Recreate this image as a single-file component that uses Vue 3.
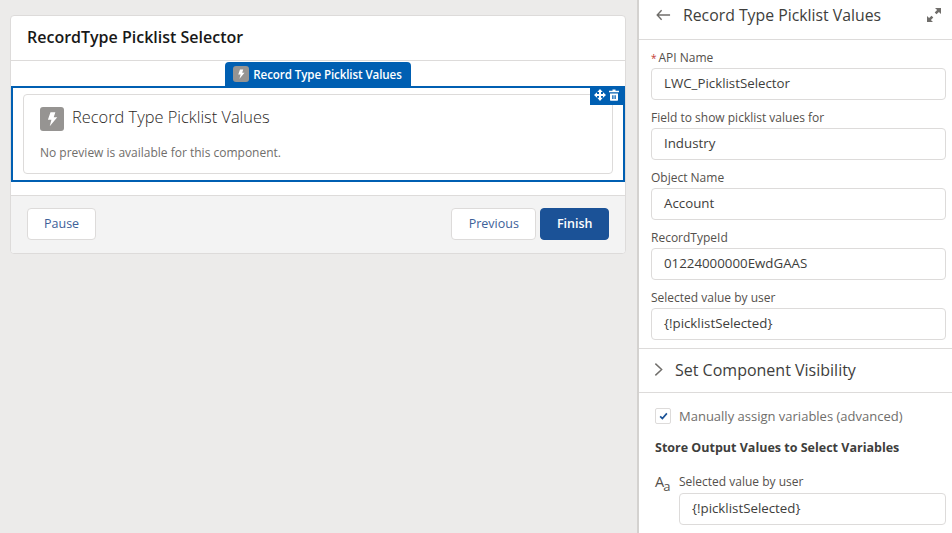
<template>
  <div class="builder">
    <main class="canvas">
      <section class="screen">
        <h1 class="screen-title">RecordType Picklist Selector</h1>
        <div class="screen-body">
          <div class="tab-row">
            <div class="tab">
              <span class="bolt bolt-small">
                <svg viewBox="0 0 24 24"><path d="M10 3h6.500l-2.200 6.500h4.700L9 21.500l2.200-8.500H6.500z" /></svg>
              </span>
              Record Type Picklist Values
            </div>
          </div>
          <div class="selected">
            <div class="tools">
              <svg class="tool-move" viewBox="0 0 24 24"><path d="M12 0l5.500 6H14v4h4V6.500l6 5.500-6 5.500V14h-4v3.500h3.500L12 24l-5.500-6.500H10V14H6v3.500L0 12l6-5.500V10h4V6H6.500z" /></svg>
              <svg class="tool-trash" viewBox="0 0 24 24"><path d="M9 1h6v2.500h7v3H2v-3h7zM4 9h16v13a1.500 1.500 0 0 1-1.500 1.500h-13A1.500 1.500 0 0 1 4 22zm4.500 3.500V20h2.500v-7.500zm4.500 0V20h2.500v-7.500z" /></svg>
            </div>
            <div class="component-card">
              <div class="component-head">
                <span class="bolt">
                  <svg viewBox="0 0 24 24"><path d="M10 3h6.500l-2.200 6.500h4.700L9 21.500l2.200-8.500H6.500z" /></svg>
                </span>
                <span class="component-name">Record Type Picklist Values</span>
              </div>
              <p class="no-preview">No preview is available for this component.</p>
            </div>
          </div>
        </div>
        <footer class="screen-footer">
          <button class="btn">Pause</button>
          <div class="nav">
            <button class="btn btn-prev">Previous</button>
            <button class="btn btn-finish">Finish</button>
          </div>
        </footer>
      </section>
    </main>

    <aside class="panel">
      <header class="panel-head">
        <svg class="back" viewBox="0 0 16 12"><path d="M6 1 1.300 6 6 11M1.500 6H15" /></svg>
        <span class="panel-title">Record Type Picklist Values</span>
        <svg class="expand" viewBox="0 0 14 14"><path d="M8 0h6v6l-2.100-2.100-2.400 2.400-1.800-1.800 2.400-2.400zM6 14H0V8l2.100 2.100 2.400-2.400 1.800 1.800-2.400 2.400z" /></svg>
      </header>

      <div class="fields">
        <div v-for="field in fields" :key="field.label" class="field">
          <label><span v-if="field.required" class="req">*</span>{{ field.label }}</label>
          <div class="input">{{ field.value }}</div>
        </div>
      </div>

      <div class="visibility">
        <svg viewBox="0 0 10 16"><path d="M1.500 1.500 8.500 8l-7 6.500" /></svg>
        <span>Set Component Visibility</span>
      </div>

      <div class="outputs">
        <div class="check-row">
          <span class="checkbox">
            <svg viewBox="0 0 12 10"><path d="M1.500 5.500 4.500 8.300 10.500 1.500" /></svg>
          </span>
          <span>Manually assign variables (advanced)</span>
        </div>
        <h2 class="outputs-title">Store Output Values to Select Variables</h2>
        <div class="var-row">
          <span class="aa">A<small>a</small></span>
          <div class="var-field">
            <label>Selected value by user</label>
            <div class="input">{!picklistSelected}</div>
          </div>
        </div>
      </div>
    </aside>
  </div>
</template>

<script setup>
const fields = [
  { label: 'API Name', value: 'LWC_PicklistSelector', required: true },
  { label: 'Field to show picklist values for', value: 'Industry' },
  { label: 'Object Name', value: 'Account' },
  { label: 'RecordTypeId', value: '01224000000EwdGAAS' },
  { label: 'Selected value by user', value: '{!picklistSelected}' }
]
</script>

<style>
html,
body {
  margin: 0;
  height: 533px;
  overflow: hidden;
}
</style>

<style scoped>
.builder {
  display: flex;
  height: 533px;
  overflow: hidden;
  background: #ecebea;
  font-family: "Open Sans", "Liberation Sans", sans-serif;
  color: #3e3e3c;
}

.canvas {
  flex: 1;
  padding: 15px 11px 0 10px;
}

.screen {
  background: #fff;
  border: 1px solid #dddbda;
  border-radius: 4px;
  overflow: hidden;
}

.screen-title {
  margin: 0;
  height: 44px;
  line-height: 42px;
  padding-left: 16px;
  font-size: 16px;
  font-weight: 600;
  color: #181818;
  border-bottom: 1px solid #dddbda;
}

.screen-body {
  height: 134px;
  background: #fff;
}

.tab-row {
  display: flex;
  justify-content: center;
  height: 25px;
  padding-top: 1px;
  box-sizing: border-box;
}

.tab {
  display: flex;
  align-items: center;
  gap: 4px;
  height: 24px;
  padding: 0 9px 0 8px;
  box-sizing: border-box;
  background: #005fb2;
  color: #fff;
  font-size: 11.600px;
  font-weight: 600;
  letter-spacing: -0.1px;
  border-radius: 4px 4px 0 0;
}

.bolt {
  display: flex;
  align-items: center;
  justify-content: center;
  width: 24px;
  height: 24px;
  background: #969492;
  border-radius: 3px;
}

.bolt svg {
  width: 18px;
  height: 18px;
  fill: #fff;
}

.bolt-small {
  width: 16px;
  height: 16px;
}

.bolt-small svg {
  width: 12px;
  height: 12px;
}

.selected {
  position: relative;
  height: 96px;
  box-sizing: border-box;
  padding: 6px 10px;
  border: 2px solid #005fb2;
}

.tools {
  position: absolute;
  top: -2px;
  right: -2px;
  display: flex;
  align-items: center;
  gap: 2px;
  height: 18px;
  padding: 0 5px 1px 4px;
  background: #005fb2;
}

.tools svg {
  fill: #fff;
}

.tool-move {
  width: 12px;
  height: 12px;
}

.tool-trash {
  width: 12px;
  height: 12px;
}

.component-card {
  height: 80px;
  box-sizing: border-box;
  padding: 12px 16px;
  border: 1px solid #dddbda;
  border-radius: 4px;
}

.component-head {
  display: flex;
  align-items: center;
  gap: 8px;
}

.component-name {
  font-size: 16.400px;
  line-height: 20px;
  padding-bottom: 4px;
  font-weight: 300;
  color: #2b2826;
}

.no-preview {
  margin: 13px 0 0;
  font-size: 12px;
  line-height: 18px;
  color: #706e6b;
}

.screen-footer {
  display: flex;
  justify-content: space-between;
  align-items: center;
  height: 58px;
  box-sizing: border-box;
  padding: 0 16px 2px;
  background: #f3f3f3;
  border-top: 1px solid #dddbda;
}

.nav {
  display: flex;
  gap: 4px;
}

.btn {
  height: 32px;
  padding: 0 16px;
  font-family: inherit;
  font-size: 12.500px;
  color: #3d6199;
  background: #fff;
  border: 1px solid #dddbda;
  border-radius: 4px;
}

.btn-prev {
  padding: 0 16.500px;
}

.btn-finish {
  padding: 0 15.500px;
  background: #1b5297;
  border-color: #1b5297;
  color: #fff;
  font-weight: 600;
}

.panel {
  width: 315px;
  flex: none;
  box-sizing: border-box;
  background: #fff;
  border-left: 2px solid #d4d2d0;
}

.panel-head {
  display: flex;
  align-items: center;
  height: 40px;
  box-sizing: border-box;
  padding: 0 11px 9px 17px;
  border-bottom: 1px solid #dddbda;
}

.back {
  width: 15px;
  height: 12px;
  margin-right: 12px;
  fill: none;
  stroke: #706e6b;
  stroke-width: 1.500;
}

.panel-title {
  flex: 1;
  font-size: 15.800px;
  color: #3e3e3c;
}

.expand {
  width: 14px;
  height: 14px;
  fill: #706e6b;
}

.fields {
  display: flex;
  flex-direction: column;
  gap: 8px;
  padding: 8px 6px 8px 12px;
  border-bottom: 1px solid #dddbda;
}

.field label,
.var-field label {
  display: block;
  height: 20px;
  line-height: 19px;
  font-size: 12px;
  color: #54504c;
}

.req {
  color: #c23934;
  margin-right: 2px;
  font-size: 10px;
}

.input {
  height: 32px;
  line-height: 28px;
  box-sizing: border-box;
  padding-left: 12px;
  font-size: 13.300px;
  color: #3e3e3c;
  background: #fff;
  border: 1px solid #dddbda;
  border-radius: 4px;
}

.visibility {
  display: flex;
  align-items: center;
  gap: 12px;
  height: 44px;
  box-sizing: border-box;
  padding: 0 0 2px 15px;
  font-size: 16px;
  color: #3e3e3c;
  border-bottom: 1px solid #dddbda;
}

.visibility svg {
  width: 9px;
  height: 15px;
  fill: none;
  stroke: #706e6b;
  stroke-width: 1.600;
}

.outputs {
  padding: 15px 6px 0 16px;
}

.check-row {
  display: flex;
  align-items: center;
  gap: 8px;
  height: 16px;
  font-size: 13px;
  color: #706e6b;
}

.checkbox {
  display: flex;
  align-items: center;
  justify-content: center;
  width: 14px;
  height: 14px;
  background: #fff;
  border: 1px solid #dddbda;
  border-radius: 2px;
}

.checkbox svg {
  width: 9px;
  height: 8px;
  fill: none;
  stroke: #1b5297;
  stroke-width: 2.200;
}

.outputs-title {
  margin: 15px 0 0;
  line-height: 18px;
  font-size: 12.500px;
  font-weight: 700;
  color: #3e3e3c;
}

.var-row {
  display: flex;
  margin-top: 17px;
}

.aa {
  width: 24px;
  flex: none;
  font-size: 14.500px;
  line-height: 16px;
  color: #54504c;
}

.aa small {
  font-size: 13px;
  position: relative;
  top: 4px;
  left: -1px;
}

.var-field {
  flex: 1;
}

.var-field label {
  height: 16px;
  line-height: 16px;
  margin-bottom: 3px;
}
</style>
